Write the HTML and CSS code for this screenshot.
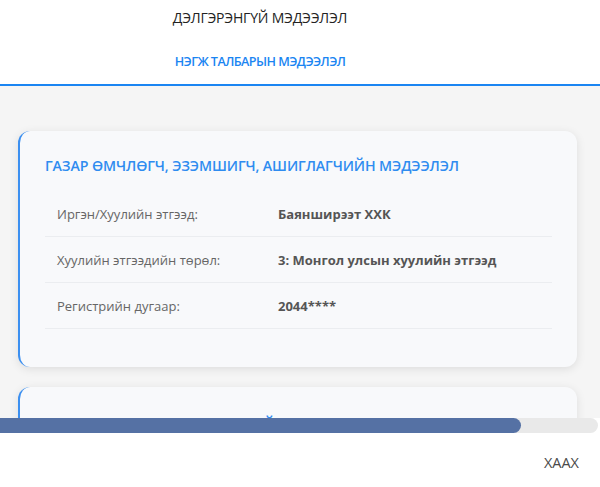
FILE: index.html
```html
<!DOCTYPE html>
<html lang="mn">
<head>
<meta charset="utf-8">
<title>Дэлгэрэнгүй мэдээлэл</title>
<link rel="stylesheet" href="styles.css">
</head>
<body>
<div class="dialog">
  <header class="dialog-head">
    <h1 class="dialog-title">ДЭЛГЭРЭНГҮЙ МЭДЭЭЛЭЛ</h1>
    <nav class="tabs">
      <span class="tab tab-active">НЭГЖ ТАЛБАРЫН МЭДЭЭЛЭЛ</span>
    </nav>
  </header>
  <main class="dialog-body">
    <section class="card">
      <h2 class="card-title">ГАЗАР ӨМЧЛӨГЧ, ЭЗЭМШИГЧ, АШИГЛАГЧИЙН МЭДЭЭЛЭЛ</h2>
      <div class="rows">
        <div class="row"><span class="label">Иргэн/Хуулийн этгээд:</span><span class="value">Баянширээт ХХК</span></div>
        <div class="row"><span class="label">Хуулийн этгээдийн төрөл:</span><span class="value">3: Монгол улсын хуулийн этгээд</span></div>
        <div class="row"><span class="label">Регистрийн дугаар:</span><span class="value">2044****</span></div>
      </div>
    </section>
    <section class="card">
      <h2 class="card-title">ГАЗАР ӨМЧЛӨХ ГЭРЧИЛГЭЭНИЙ МЭДЭЭЛЭЛ</h2>
    </section>
  </main>
  <div class="hscroll"><div class="hscroll-thumb"></div></div>
  <footer class="dialog-foot">
    <button class="btn-close" type="button">ХААХ</button>
  </footer>
</div>
</body>
</html>
```
FILE: styles.css
```css
* { box-sizing: border-box; }
html, body { margin: 0; padding: 0; }
body {
  font-family: "Open Sans", "Noto Sans", "Liberation Sans", sans-serif;
  background: #fff;
  width: 600px;
  height: 487px;
  overflow: hidden;
}
.dialog {
  display: flex;
  flex-direction: column;
  height: 487px;
}
.dialog-head {
  background: #fff;
  border-bottom: 2px solid #1a85f2;
  padding-right: 80px;
}
.dialog-title {
  margin: 0;
  height: 37px;
  line-height: 36px;
  text-align: center;
  font-size: 14px;
  font-weight: 400;
  color: #222;
  letter-spacing: -0.2px;
}
.tabs {
  display: flex;
  justify-content: center;
  height: 47px;
}
.tab {
  font-size: 12.6px;
  font-weight: 600;
  line-height: 50px;
  letter-spacing: -0.55px;
}
.tab-active { color: #1a85f2; }
.dialog-body {
  flex: 0 0 332px;
  background: #f5f5f5;
  overflow: hidden;
  padding: 45px 23px 0 18px;
  display: flex;
  flex-direction: column;
  gap: 20px;
}
.card {
  flex: none;
  background: #f8f9fb;
  border-radius: 12px;
  border-left: 2px solid #3b8ff0;
  box-shadow: 0 2px 10px rgba(0,0,0,0.10);
  padding: 24px 25px 38px 25px;
}
.card-title {
  margin: 0 0 14px;
  font-size: 14.2px;
  font-weight: 600;
  color: #2f8cf0;
  line-height: 22px;
  letter-spacing: -0.1px;
}
.card + .card .card-title { margin-top: 2px; }
.row {
  display: grid;
  grid-template-columns: 221px 1fr;
  align-items: center;
  height: 46px;
  padding: 0 12px;
  border-bottom: 1px solid #ebedf0;
  font-size: 13px;
}
.label { color: #666; }
.value { color: #555; font-weight: 700; }
.hscroll {
  flex: 0 0 15px;
  background: #e9e9e9;
  border-radius: 0 8px 8px 0;
  margin-right: 2px;
  display: flex;
}
.hscroll-thumb {
  width: 521px;
  background: #5571a4;
  border-radius: 0 8px 8px 0;
}
.dialog-foot {
  flex: 1;
  display: flex;
  justify-content: flex-end;
  align-items: center;
  padding: 4px 21px 0 0;
}
.btn-close {
  border: 0;
  background: none;
  font-family: inherit;
  font-size: 14.5px;
  color: #4a4a4a;
  padding: 0;
  letter-spacing: 0;
}
```
